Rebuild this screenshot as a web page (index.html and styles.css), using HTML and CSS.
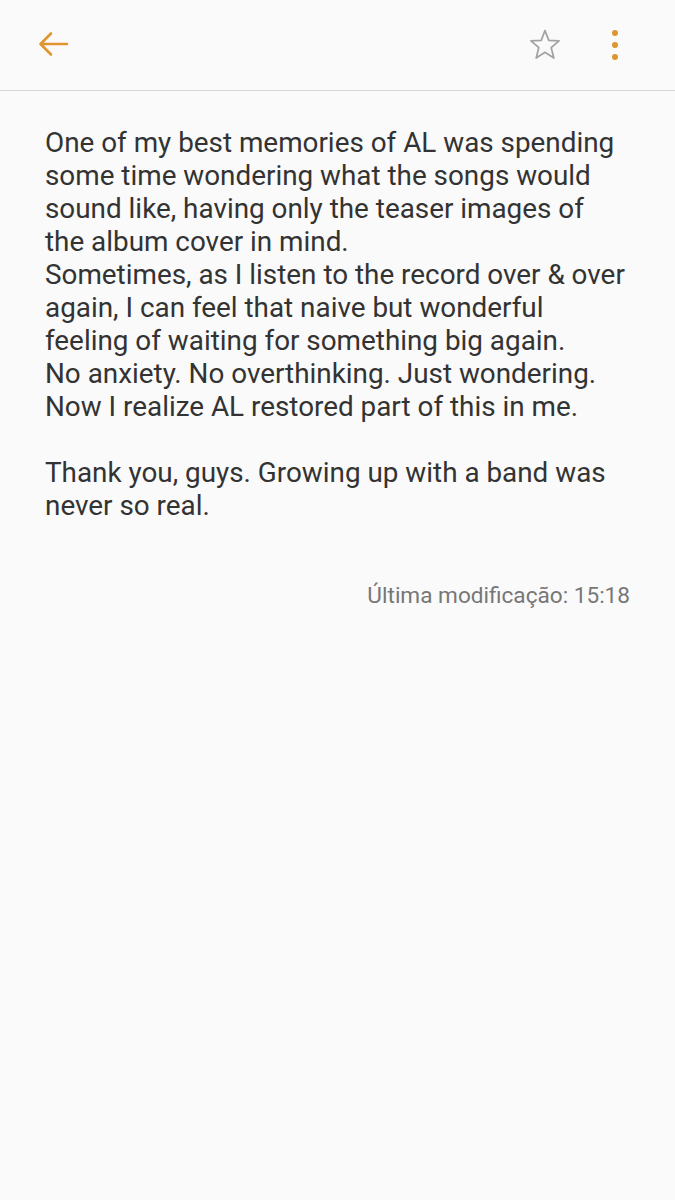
FILE: index.html
```html
<!DOCTYPE html>
<html>
<head>
<meta charset="utf-8">
<link rel="stylesheet" href="styles.css">
</head>
<body>
<header class="bar">
  <svg class="back" width="34" height="34" viewBox="0 0 34 34"><path d="M31 17H5M15 6.5L4.5 17L15 27.5" fill="none" stroke="#e0952e" stroke-width="2.6" stroke-linecap="round" stroke-linejoin="round"/></svg>
  <div class="spacer"></div>
  <svg class="star" width="34" height="34" viewBox="0 0 34 34"><path d="M17 2.5L20.8 12.3L31 12.9L23.2 19.6L25.8 30L17 24.3L8.2 30L10.8 19.6L3 12.9L13.2 12.3Z" fill="none" stroke="#a3a3a3" stroke-width="1.8" stroke-linejoin="round"/></svg>
  <svg class="more" width="12" height="34" viewBox="0 0 12 34"><circle cx="6" cy="5" r="3" fill="#e0952e"/><circle cx="6" cy="17" r="3" fill="#e0952e"/><circle cx="6" cy="29" r="3" fill="#e0952e"/></svg>
</header>
<main class="note">
  <p class="body">One of my best memories of AL was spending<br>some time wondering what the songs would<br>sound like, having only the teaser images of<br>the album cover in mind.<br>Sometimes, as I listen to the record over &amp; over<br>again, I can feel that naive but wonderful<br>feeling of waiting for something big again.<br>No anxiety. No overthinking. Just wondering.<br>Now I realize AL restored part of this in me.<br><br>Thank you, guys. Growing up with a band was<br>never so real.</p>
  <p class="stamp">Última modificação: 15:18</p>
</main>
</body>
</html>
```
FILE: styles.css
```css
html, body {
  margin: 0;
  padding: 0;
  background: #fafafa;
  font-family: Roboto, "Noto Sans", sans-serif;
}
.bar {
  height: 91px;
  border-bottom: 1.5px solid #d6d6d6;
  display: flex;
  align-items: center;
  padding: 0 54px 0 36px;
  box-sizing: border-box;
}
.bar .back { margin-top: -2px; }
.spacer { flex: 1; }
.star { margin-right: 47px; }
.note {
  padding: 35px 45px 0 45px;
}
.body {
  margin: 0;
  font-size: 27.85px;
  line-height: 33px;
  color: #333333;
}
.stamp {
  margin: 60px 0 0 0;
  text-align: right;
  font-size: 22.6px;
  color: #777777;
}
```
